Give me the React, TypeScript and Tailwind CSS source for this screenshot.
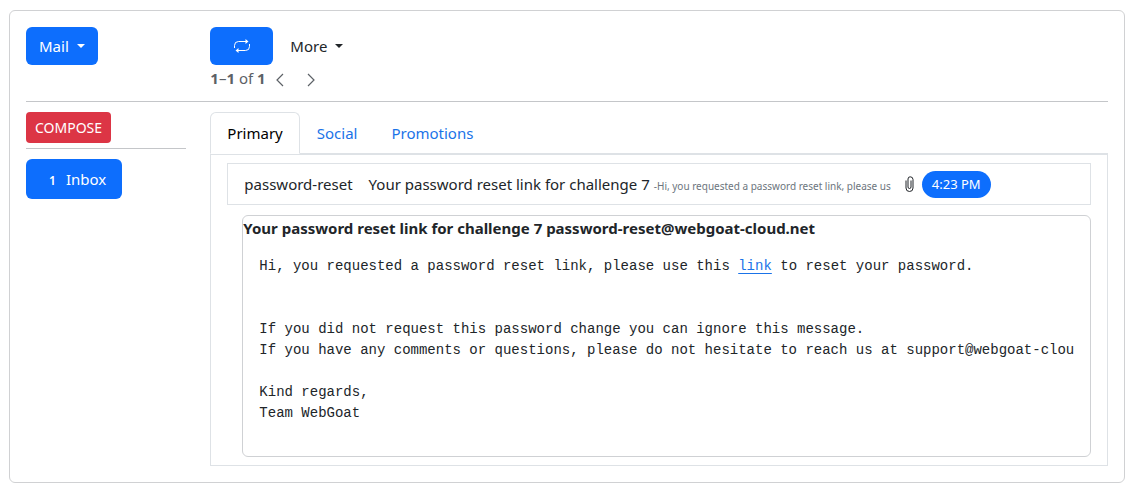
import React from "react";

function Caret() {
  return (
    <span
      aria-hidden="true"
      className="inline-block border-x-4 border-t-4 border-x-transparent border-t-current"
    />
  );
}

function LoopIcon() {
  return (
    <svg width="18" height="16" viewBox="0 0 18 16" fill="none" stroke="currentColor" aria-hidden="true">
      <path d="M1.5 10V7.5a4 4 0 0 1 4-4H14" />
      <path d="M16.5 6v2.5a4 4 0 0 1-4 4H4" />
      <path d="M12.5 1l3 2.5-3 2.5zM5.5 10l-3 2.5 3 2.5z" fill="currentColor" stroke="none" />
    </svg>
  );
}

function ChevronIcon({ direction }: { direction: "left" | "right" }) {
  return (
    <svg width="8" height="14" viewBox="0 0 8 14" fill="none" stroke="currentColor" strokeWidth="1.2" aria-hidden="true">
      <path d={direction === "left" ? "M7 1L1 7l6 6" : "M1 1l6 6-6 6"} />
    </svg>
  );
}

function PaperclipIcon() {
  return (
    <svg width="9" height="16" viewBox="0 0 9 16" fill="none" stroke="currentColor" aria-hidden="true">
      <path d="M6 4.5V11a1.5 1.5 0 0 1-3 0V3a2.2 2.2 0 0 1 2.2-2.2A2.8 2.8 0 0 1 8 3.5V12a3.5 3.5 0 0 1-7 0V4.5" />
    </svg>
  );
}

const message = {
  sender: "password-reset",
  subject: "Your password reset link for challenge 7",
  preview: "-Hi, you requested a password reset link, please us",
  time: "4:23 PM",
  address: "password-reset@webgoat-cloud.net",
};

const bodyLines = [
  "",
  "",
  "If you did not request this password change you can ignore this message.",
  "If you have any comments or questions, please do not hesitate to reach us at support@webgoat-clou",
  "",
  "Kind regards,",
  "Team WebGoat",
  "",
];

function Toolbar() {
  return (
    <div className="grid grid-cols-12 gap-x-6">
      <div className="col-span-2">
        <button type="button" className="flex h-[38px] items-center gap-2 rounded-md bg-[#0d6efd] px-[13px] text-white">
          Mail <Caret />
        </button>
      </div>
      <div className="col-span-10">
        <div className="flex items-center gap-1">
          <button type="button" aria-label="Refresh" className="flex h-[38px] w-[63px] items-center justify-center rounded-md bg-[#0d6efd] text-white">
            <LoopIcon />
          </button>
          <button type="button" className="flex h-[38px] items-center gap-2 px-[13px]">
            More <Caret />
          </button>
        </div>
        <div className="flex h-6 items-center pt-0.5 text-[#5c6166]">
          <span>
            <b>1</b>–<b>1</b> of <b>1</b>
          </span>
          <button type="button" aria-label="Previous page" className="ml-1 flex h-6 w-5 items-center justify-center pt-1">
            <ChevronIcon direction="left" />
          </button>
          <button type="button" aria-label="Next page" className="ml-[11px] flex h-6 w-5 items-center justify-center pt-1">
            <ChevronIcon direction="right" />
          </button>
        </div>
      </div>
    </div>
  );
}

function Sidebar() {
  return (
    <aside className="col-span-2">
      <button type="button" className="flex h-[31px] items-center rounded bg-[#dc3545] px-[9px] text-sm text-white">
        COMPOSE
      </button>
      <hr className="mt-[5px] border-[#c4c6c9]" />
      <a href="#inbox" className="mt-[10px] inline-flex h-10 items-baseline gap-[10px] rounded-md bg-[#0d6efd] pl-[23px] pr-4 pt-2 text-white">
        <span className="text-xs font-semibold">1</span>
        Inbox
      </a>
    </aside>
  );
}

function Tabs() {
  return (
    <nav className="flex border-b border-[#dee2e6]">
      <a href="#primary" className="-mb-px rounded-t-md border border-[#dee2e6] border-b-white bg-white px-4 py-2 text-black">
        Primary
      </a>
      <a href="#social" className="-mb-px border border-transparent px-4 py-2 text-[#1a73e8]">
        Social
      </a>
      <a href="#promotions" className="-mb-px border border-transparent px-4 py-2 text-[#1a73e8]">
        Promotions
      </a>
    </nav>
  );
}

function MessageRow() {
  return (
    <a href="#message" className="flex h-[42px] items-center whitespace-nowrap border border-[#dee2e6] px-4">
      <span className="mr-4">{message.sender}</span>
      <span className="flex items-baseline gap-1">
        {message.subject}
        <small className="text-[10px] leading-4 text-[#6c757d]">{message.preview}</small>
      </span>
      <span className="ml-[14px] flex">
        <PaperclipIcon />
      </span>
      <span className="ml-2 flex h-[27px] items-center rounded-full bg-[#0d6efd] px-[10px] text-[13px] text-white">
        {message.time}
      </span>
    </a>
  );
}

function MessageBody() {
  return (
    <article className="ml-[15px] mt-[10px] rounded-md border border-[#cfd1d4]">
      <h1 className="font-bold">
        {message.subject} {message.address}
      </h1>
      <div className="px-4 pb-[11px] pt-4">
        <pre className="overflow-hidden font-['Liberation_Mono',monospace] text-sm leading-[21px]">
          <span className="flex">
            <span>{"Hi, you requested a password reset link, please use this "}</span>
            <a href="#reset" className="text-[#1a73e8] underline underline-offset-3">link</a>
            <span>{" to reset your password."}</span>
          </span>
          {bodyLines.map((line, index) => (
            <span key={index} className="block min-h-[21px]">{line}</span>
          ))}
        </pre>
      </div>
    </article>
  );
}

export default function App() {
  return (
    <div className="px-[9px] pt-[10px] font-['Noto_Sans',sans-serif] text-[15px] leading-6 text-[#212529]">
      <main className="mr-px rounded-md border border-[#d0d1d3] p-4">
        <Toolbar />
        <hr className="mb-[10px] mt-3 border-[#c4c6c9]" />
        <div className="grid grid-cols-12 gap-x-6">
          <Sidebar />
          <section className="col-span-10">
            <Tabs />
            <div className="border border-[#dee2e6] px-4 py-2">
              <MessageRow />
              <MessageBody />
            </div>
          </section>
        </div>
      </main>
    </div>
  );
}
